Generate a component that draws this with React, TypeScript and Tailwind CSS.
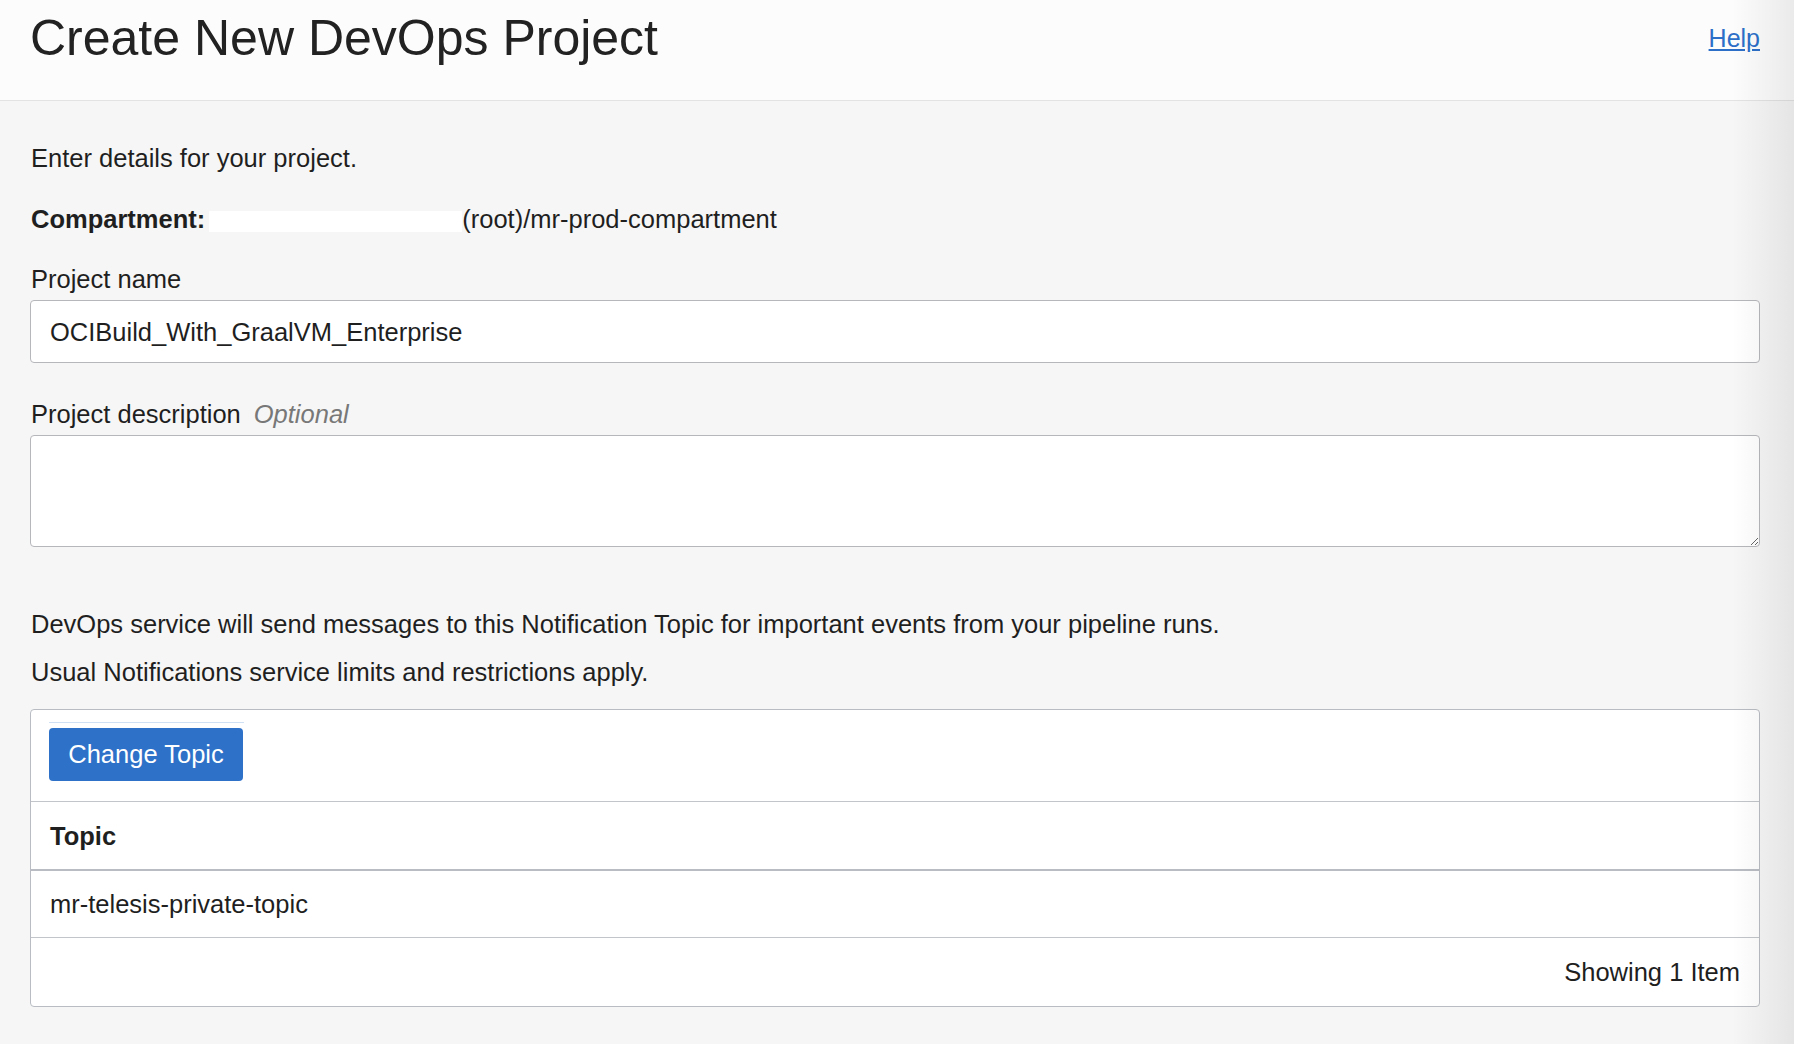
import React from 'react'

const font = { fontFamily: '"Liberation Sans", Arial, Helvetica, sans-serif' }

function Label({ children, optional }: { children: React.ReactNode; optional?: boolean }) {
  return (
    <div className="h-[30px] text-[25.5px] leading-[30px] text-[#1f1f1f]">
      {children}
      {optional ? <span className="ml-[13px] italic text-[#787878]">Optional</span> : null}
    </div>
  )
}

export default function App() {
  return (
    <div className="relative min-h-[1044px] overflow-hidden bg-[#f6f6f6]" style={font}>
      <header className="flex h-[101px] items-start justify-between border-b border-[#e3e3e3] bg-[#fcfcfc] pl-[30px] pr-[34px]">
        <h1 className="m-0 mt-[9px] text-[50px] font-normal leading-[58px] text-[#222]">Create New DevOps Project</h1>
        <a href="#" className="mt-[23px] text-[25px] leading-[30px] text-[#2c6fc8] underline">
          Help
        </a>
      </header>

      <main className="pl-[31px] pr-[34px] pt-[42px] text-[25.5px]">
        <p className="m-0 leading-[30px] text-[#1f1f1f]">Enter details for your project.</p>

        <p className="m-0 mt-[31px] flex items-center leading-[30px] text-[#1f1f1f]">
          <span className="font-bold">Compartment:</span>
          <span className="ml-[4px] inline-block h-[21px] w-[253px] translate-y-[2px] bg-white" />
          <span>(root)/mr-prod-compartment</span>
        </p>

        <div className="mt-[30px]">
          <Label>Project name</Label>
          <div className="-ml-px mt-[6px] flex h-[63px] items-center rounded-[4px] border border-[#b6b7bb] bg-white pl-[19px] pt-px text-[#1f1f1f]">
            OCIBuild_With_GraalVM_Enterprise
          </div>
        </div>

        <div className="mt-[36px]">
          <Label optional>Project description</Label>
          <textarea
            className="-ml-px mt-[6px] block h-[112px] w-[calc(100%+1px)] rounded-[4px] border border-[#b6b7bb] bg-white outline-none"
            defaultValue=""
          />
        </div>

        <p className="m-0 mt-[62px] leading-[30px] text-[#1f1f1f]">
          DevOps service will send messages to this Notification Topic for important events from your pipeline runs.
        </p>
        <p className="m-0 mt-[18px] leading-[30px] text-[#1f1f1f]">
          Usual Notifications service limits and restrictions apply.
        </p>

        <div className="-ml-px mt-[22px] rounded-[4px] border border-[#b9bcc2] bg-white">
          <div className="px-[18px] pb-[20px] pt-[12px]">
            <div className="h-px w-[195px] bg-[#cfe0f5]" />
            <button
              type="button"
              className="mt-[5px] flex h-[53px] w-[194px] items-center justify-center rounded-[4px] bg-[#2e71c8] text-[25.5px] text-white"
            >
              Change Topic
            </button>
          </div>
          <div className="flex h-[68px] items-center border-t border-[#c2c5ca] pl-[19px] pt-px font-bold text-[#1f1f1f]">
            Topic
          </div>
          <div className="flex h-[68px] items-center border-t-2 border-[#b9bcc2] pl-[19px] pt-px text-[#1f1f1f]">
            mr-telesis-private-topic
          </div>
          <div className="flex h-[69px] items-center justify-end border-t border-[#c2c5ca] pr-[19px] pt-px text-[#1f1f1f]">
            Showing 1 Item
          </div>
        </div>
      </main>

      <div className="pointer-events-none absolute right-0 top-0 h-full w-[62px] bg-gradient-to-r from-transparent to-[rgba(0,0,0,0.07)]" />
    </div>
  )
}
